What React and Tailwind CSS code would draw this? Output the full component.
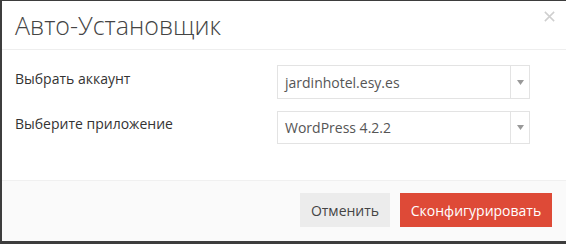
import React from 'react';

export default function App() {
  return (
    <div className="w-[566px] h-[244px] bg-[#3d3d3d] pl-[2px] pt-[1px] pb-[3px] overflow-hidden" style={{ fontFamily: '"Open Sans", sans-serif' }}>
      <div className="h-full bg-white flex flex-col">
        {/* Header */}
        <div className="h-[49px] border-b border-[#eeeeee] flex items-start justify-between pl-[13px] pr-[10px]">
          <h1 className="text-[25px] font-light text-[#444] leading-none mt-[12px]">Авто-Установщик</h1>
          <button className="text-[#cfcfcf] mt-[9px]">
            <svg className="w-[13px] h-[13px]" viewBox="0 0 14 14" fill="none" stroke="currentColor" strokeWidth="1.6">
              <path d="M2 2l10 10M12 2L2 12" />
            </svg>
          </button>
        </div>

        {/* Body */}
        <div className="flex-1 pl-[13px] pr-[36px] pt-[15px] flex flex-col gap-[12px]">
          <div className="flex items-start">
            <label className="w-[262px] text-[14px] text-[#333] pt-[3px]">Выбрать аккаунт</label>
            <div className="flex-1 h-[34px] border border-[#e3e3e3] flex">
              <span className="flex-1 px-[7px] flex items-center text-[14px] text-[#555]">jardinhotel.esy.es</span>
              <span className="w-[19px] border-l border-[#e3e3e3] flex items-center justify-center">
                <svg className="w-[7px] h-[5px]" viewBox="0 0 7 5"><path d="M0 0h7L3.5 5z" fill="#999" /></svg>
              </span>
            </div>
          </div>
          <div className="flex items-start">
            <label className="w-[262px] text-[14px] text-[#333] pt-[2px]">Выберите приложение</label>
            <div className="flex-1 h-[33px] border border-[#e3e3e3] flex">
              <span className="flex-1 px-[7px] flex items-center text-[14px] text-[#555]">WordPress 4.2.2</span>
              <span className="w-[19px] border-l border-[#e3e3e3] flex items-center justify-center">
                <svg className="w-[7px] h-[5px]" viewBox="0 0 7 5"><path d="M0 0h7L3.5 5z" fill="#999" /></svg>
              </span>
            </div>
          </div>
        </div>

        {/* Footer */}
        <div className="h-[61px] bg-[#fafafa] border-t border-[#f0f0f0] flex items-start justify-end gap-[10px] pr-[14px] pt-[12px]">
          <button className="h-[34px] w-[90px] bg-[#ececec] text-[14px] text-[#444]">Отменить</button>
          <button className="h-[34px] w-[152px] bg-[#de4a37] text-[14px] text-white">Сконфигурировать</button>
        </div>
      </div>
    </div>
  );
}
